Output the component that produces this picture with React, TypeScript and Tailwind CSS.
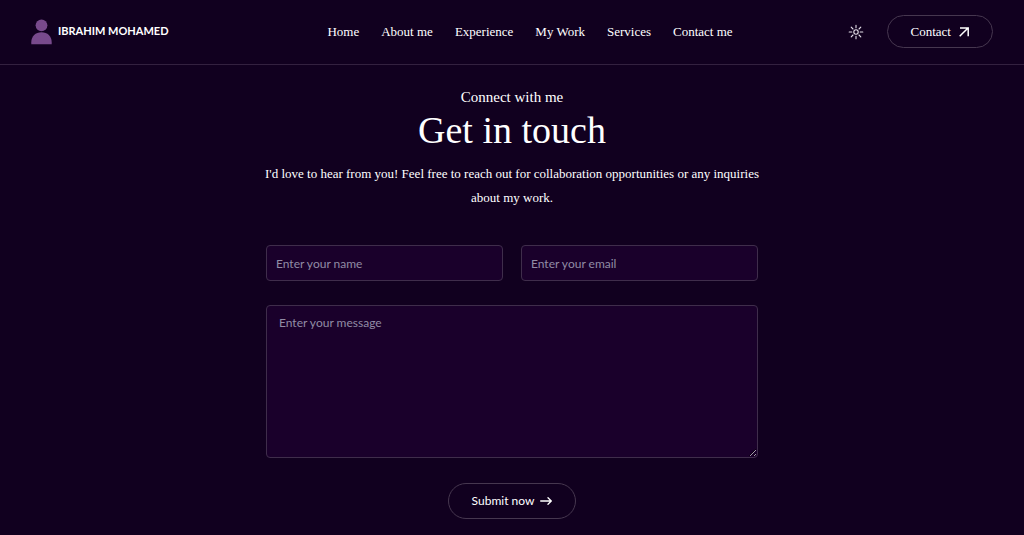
import { useState } from "react";

/* ── Data ── */

const NAV_LINKS = [
  { label: "Home", href: "#top" },
  { label: "About me", href: "#about" },
  { label: "Experience", href: "#experience" },
  { label: "My Work", href: "#work" },
  { label: "Services", href: "#services" },
  { label: "Contact me", href: "#contact" },
];

const FIELD =
  "w-full rounded-[4px] border border-[#3f2d4b] bg-[#1a002b] text-xs text-white outline-none placeholder:text-[#918ca5] placeholder:opacity-100 focus:border-[#7a6485]";

/* ── Icons ── */

function UserMark() {
  return (
    <svg viewBox="0 0 22 26" className="h-[26px] w-[22px] shrink-0" fill="#784a8c" aria-hidden="true">
      <circle cx="10.5" cy="6.3" r="5.9" />
      <path d="M.3 25.3v-2c0-6 4.2-10 10.2-10s10.2 4 10.2 10v2z" />
    </svg>
  );
}

function SunIcon() {
  return (
    <svg viewBox="0 0 16 16" className="h-4 w-4" fill="none" stroke="#e6e0ea" strokeWidth="1.1" strokeLinecap="round" aria-hidden="true">
      <circle cx="8" cy="8" r="2.2" />
      <path d="M8 1.2v2.6M8 12.2v2.6M1.2 8h2.6M12.2 8h2.6M3.2 3.2 5 5M11 11l1.8 1.8M12.8 3.2 11 5M5 11l-1.8 1.8" />
    </svg>
  );
}

function DiagonalArrow() {
  return (
    <svg viewBox="0 0 10 10" className="h-[10px] w-[10px]" fill="none" stroke="#fff" strokeWidth="1.5" aria-hidden="true">
      <path d="M.7 9.3 9 1M1 1h8.2v8.2" />
    </svg>
  );
}

function RightArrow() {
  return (
    <svg viewBox="0 0 12 8" className="h-2 w-3" fill="none" stroke="#fff" strokeWidth="1.3" strokeLinecap="round" strokeLinejoin="round" aria-hidden="true">
      <path d="M.7 4h10.4M8 .8 11.3 4 8 7.2" />
    </svg>
  );
}

/* ── Navbar ── */

function Navbar({ dark, onToggle }: { dark: boolean; onToggle: () => void }) {
  return (
    <nav className="flex items-center justify-between border-b border-[#33213f] px-[31px] pt-[15px] pb-4">
      <a href="#top" className="mr-11 flex items-center gap-[5px]">
        <UserMark />
        <span className="font-['Lato',sans-serif] text-[11px] font-bold whitespace-nowrap">IBRAHIM MOHAMED</span>
      </a>

      <ul className="flex items-center gap-[22px] text-[13px]">
        {NAV_LINKS.map((link) => (
          <li key={link.label}>
            <a href={link.href} className="whitespace-nowrap">
              {link.label}
            </a>
          </li>
        ))}
      </ul>

      <div className="flex items-center gap-[23px]">
        <button type="button" aria-label="Toggle theme" aria-pressed={dark} onClick={onToggle}>
          <SunIcon />
        </button>
        <a
          href="#contact"
          className="flex h-[33px] items-center gap-2 rounded-full border border-[#46374f] px-[23px] text-[13px]"
        >
          Contact
          <DiagonalArrow />
        </a>
      </div>
    </nav>
  );
}

/* ── Contact section ── */

function Contact() {
  return (
    <section id="contact" className="px-8 pt-[22px] pb-4 text-center">
      <h4 className="text-[15px] leading-5">Connect with me</h4>
      <h2 className="text-[38px] leading-[46px]">Get in touch</h2>
      <p className="mx-auto mt-[9px] max-w-[500px] text-[13px] leading-6">
        I'd love to hear from you! Feel free to reach out for collaboration opportunities or any inquiries about my work.
      </p>

      <form
        className="mx-auto mt-[35px] max-w-[492px] font-['Lato',sans-serif]"
        onSubmit={(e) => e.preventDefault()}
      >
        <div className="grid grid-cols-2 gap-[18px]">
          <input type="text" name="name" aria-label="Name" placeholder="Enter your name" required className={`${FIELD} h-9 px-[9px]`} />
          <input type="email" name="email" aria-label="Email" placeholder="Enter your email" required className={`${FIELD} h-9 px-[9px]`} />
        </div>
        <textarea
          name="message"
          aria-label="Message"
          placeholder="Enter your message"
          required
          className={`${FIELD} mt-6 block h-[153px] resize px-3 py-[9px]`}
        />
        <button
          type="submit"
          className="mx-auto mt-[25px] flex h-9 items-center gap-[6px] rounded-full border border-[#46374f] px-[23px] text-xs"
        >
          Submit now
          <RightArrow />
        </button>
      </form>
    </section>
  );
}

export default function App() {
  const [dark, setDark] = useState(true);

  return (
    <div id="top" className="min-h-screen bg-[#11001f] font-['Liberation_Serif',serif] text-white">
      <Navbar dark={dark} onToggle={() => setDark(!dark)} />
      <Contact />
    </div>
  );
}
